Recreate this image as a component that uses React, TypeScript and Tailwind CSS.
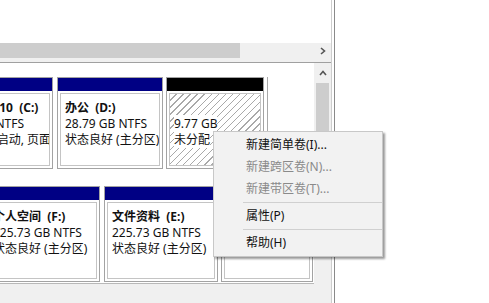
import React from "react";

type Line = { text: string; bold?: boolean };

const NAVY = "bg-[#000084]";

function Partition({
  className,
  head,
  lines,
  hatched = false,
}: {
  className: string;
  head: string;
  lines: Line[];
  hatched?: boolean;
}) {
  return (
    <div className={`flex shrink-0 flex-col border border-[#a3a3a3] bg-white ${className}`}>
      <div className={`h-[13px] shrink-0 ${head}`} />
      <div className="flex-1 p-[2px]">
        <div
          className={`h-full overflow-hidden border border-[#c4c4c4] pl-[4px] pt-[6px] leading-[16px] ${
            hatched
              ? "bg-[repeating-linear-gradient(135deg,#ffffff_0px,#ffffff_4px,#a9a9a9_4px,#a9a9a9_5px)]"
              : "bg-white"
          }`}
        >
          {lines.map((l, i) => (
            <div key={i} className="h-[16px] whitespace-pre">
              {l.text && (
                <span className={`${hatched ? "bg-white" : ""} ${l.bold ? "font-bold" : ""}`}>{l.text}</span>
              )}
            </div>
          ))}
        </div>
      </div>
    </div>
  );
}

function MenuItem({ label, disabled = false }: { label: string; disabled?: boolean }) {
  return (
    <div
      className={`flex h-[22px] items-center pl-[32px] ${disabled ? "text-[#8a8a8a]" : "text-[#111]"}`}
    >
      {label}
    </div>
  );
}

function Sep() {
  return (
    <div className="h-[5px] pt-[2px] pl-[29px]">
      <div className="h-px bg-[#d0d0d0]" />
    </div>
  );
}

export default function App() {
  return (
    <div className="relative flex h-[303px] w-[489px] overflow-hidden bg-white font-['Noto_Sans','Noto_Sans_CJK_SC',sans-serif] text-[12px] text-[#111]">
      {/* window panel */}
      <div className="flex w-[332px] shrink-0 flex-col border-r border-[#cdcdcd]">
        {/* top pane (volume list, scrolled to the end) */}
        <div className="h-[43px] shrink-0 bg-white" />
        {/* horizontal scrollbar */}
        <div className="flex h-[15px] shrink-0">
          <div className="w-[240px] bg-[#cdcdcd]" />
          <div className="flex flex-1 justify-end bg-[#f0f0f0]">
            <div className="flex w-[17px] items-center justify-center">
              <svg width="6" height="8" viewBox="0 0 6 8">
                <polyline points="1,1 4.5,4 1,7" fill="none" stroke="#555" strokeWidth="1.6" />
              </svg>
            </div>
          </div>
        </div>
        <div className="h-[4px] shrink-0 bg-[#f0f0f0]" />
        <div className="h-px shrink-0 bg-[#a0a0a0]" />

        {/* graphical disk pane */}
        <div className="flex min-h-0 flex-1">
          <div className="flex min-w-0 flex-1 flex-col overflow-hidden bg-white">
            {/* disk row 1 */}
            <div className="mt-[14px] flex h-[92px] shrink-0">
              <Partition
                className="-ml-[66px] w-[119px]"
                head={NAVY}
                lines={[
                  { text: "Windows 10  (C:)", bold: true },
                  { text: "59.90 GB NTFS" },
                  { text: "状态良好 (启动, 页面文件, 故障转储, 主分区)" },
                ]}
              />
              <Partition
                className="ml-[4px] w-[106px]"
                head={NAVY}
                lines={[
                  { text: "办公  (D:)", bold: true },
                  { text: "28.79 GB NTFS" },
                  { text: "状态良好 (主分区)" },
                ]}
              />
              <Partition
                className="ml-[3px] w-[98px]"
                head="bg-black"
                hatched
                lines={[{ text: "" }, { text: "9.77 GB" }, { text: "未分配" }]}
              />
              <div className="ml-[3px] w-px bg-[#a8a8a8]" />
            </div>

            {/* disk row 2 */}
            <div className="mt-[17px] flex h-[96px] shrink-0">
              <Partition
                className="-ml-[15px] w-[115px]"
                head={NAVY}
                lines={[
                  { text: "个人空间  (F:)", bold: true },
                  { text: "225.73 GB NTFS" },
                  { text: "状态良好 (主分区)" },
                ]}
              />
              <Partition
                className="ml-[4px] w-[114px]"
                head={NAVY}
                lines={[
                  { text: "文件资料  (E:)", bold: true },
                  { text: "225.73 GB NTFS" },
                  { text: "状态良好 (主分区)" },
                ]}
              />
              <Partition className="ml-[3px] w-[92px]" head={NAVY} lines={[]} />
            </div>
            <div className="mt-[1px] flex-1 border-t border-[#b8b8b8] bg-[#f0f0f0]" />
          </div>

          {/* vertical scrollbar */}
          <div className="flex w-[17px] shrink-0 flex-col bg-[#f0f0f0]">
            <div className="flex h-[20px] items-center justify-center">
              <svg width="8" height="6" viewBox="0 0 8 6">
                <polyline points="1,5 4,1.5 7,5" fill="none" stroke="#555" strokeWidth="1.6" />
              </svg>
            </div>
            <div className="mx-[2px] h-[117px] bg-[#cdcdcd]" />
          </div>
        </div>
      </div>
      <div className="w-[2px] shrink-0 bg-white" />
      <div className="w-px shrink-0 bg-[#8a8a8a]" />

      {/* context menu */}
      <div className="absolute left-[213px] top-[131px] w-[170px] border border-[#c8c8c8] bg-[#f2f2f2] pt-[2px] pb-[2px] shadow-[2px_2px_2px_rgba(0,0,0,0.4)]">
        <MenuItem label="新建简单卷(I)..." />
        <MenuItem label="新建跨区卷(N)..." disabled />
        <MenuItem label="新建带区卷(T)..." disabled />
        <Sep />
        <MenuItem label="属性(P)" />
        <Sep />
        <MenuItem label="帮助(H)" />
      </div>
    </div>
  );
}
